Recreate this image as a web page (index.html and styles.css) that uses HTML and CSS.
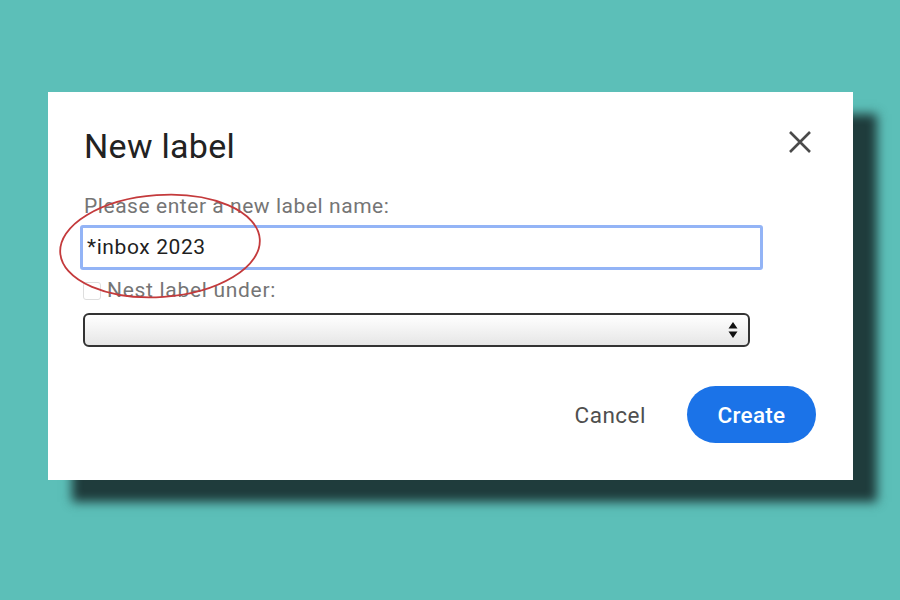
FILE: index.html
```html
<!DOCTYPE html>
<html>
<head>
<meta charset="utf-8">
<link rel="stylesheet" href="styles.css">
</head>
<body>
<div class="dialog">
  <div class="header">
    <h1 class="title">New label</h1>
    <button class="close" aria-label="Close">
      <svg width="24" height="24" viewBox="0 0 24 24"><path d="M2 2 L22 22 M22 2 L2 22" stroke="#4a4a4a" stroke-width="2.6" fill="none"/></svg>
    </button>
  </div>
  <div class="field-label">Please enter a new label name:</div>
  <div class="input">*inbox 2023</div>
  <div class="nest">
    <span class="checkbox"></span>
    <span class="nest-text">Nest label under:</span>
  </div>
  <div class="select">
    <svg class="arrows" width="10" height="20" viewBox="0 0 10 20"><path d="M5 2 L9.5 8.5 L0.5 8.5 Z M5 18 L9.5 11.5 L0.5 11.5 Z" fill="#111"/></svg>
  </div>
  <div class="actions">
    <button class="cancel">Cancel</button>
    <button class="create">Create</button>
  </div>
  <svg class="ellipse" width="220" height="120" viewBox="0 0 220 120"><ellipse cx="110" cy="60" rx="100" ry="51" transform="rotate(-4 110 60)" fill="none" stroke="#c43a3c" stroke-width="1.8"/></svg>
</div>
</body>
</html>
```
FILE: styles.css
```css
html, body {
  margin: 0;
  padding: 0;
}
body {
  background: #5cbfb8;
  width: 900px;
  height: 600px;
  overflow: hidden;
  padding: 92px 0 0 48px;
  box-sizing: border-box;
  font-family: Roboto, "Liberation Sans", Arial, sans-serif;
}
.dialog {
  position: relative;
  width: 805px;
  height: 388px;
  background: #fff;
  box-shadow: 24px 22px 10px #1f3c3c;
  box-sizing: border-box;
  padding: 34px 37px 0 32px;
  display: flex;
  flex-direction: column;
}
.header {
  display: flex;
  justify-content: space-between;
  align-items: flex-start;
  height: 40px;
}
.title {
  margin: 0 0 0 4px;
  font-size: 34px;
  line-height: 40px;
  font-weight: 400;
  letter-spacing: 0.3px;
  color: #222;
}
.close {
  border: 0;
  background: none;
  padding: 0;
  margin: 4px 4px 0 0;
  width: 24px;
  height: 24px;
}
.field-label {
  margin: 28px 0 0 4px;
  font-size: 21px;
  line-height: 24px;
  letter-spacing: 0.55px;
  color: #757575;
}
.input {
  margin-top: 7px;
  width: 683px;
  height: 45px;
  box-sizing: border-box;
  border: 3px solid #93b4f6;
  border-radius: 3px;
  padding: 0 0 0 4px;
  font-size: 21px;
  line-height: 39px;
  letter-spacing: 0.6px;
  color: #1f1f1f;
}
.nest {
  margin: 8px 0 0 3px;
  display: flex;
  align-items: center;
  height: 24px;
}
.checkbox {
  width: 16px;
  height: 16px;
  border: 1.5px solid #dedede;
  border-radius: 3px;
  margin-right: 6px;
  margin-top: 2px;
}
.nest-text {
  font-size: 21px;
  line-height: 24px;
  letter-spacing: 0.7px;
  color: #757575;
}
.select {
  margin: 11px 0 0 3px;
  width: 667px;
  height: 34px;
  box-sizing: border-box;
  border: 2px solid #333;
  border-radius: 6px;
  background: linear-gradient(#ffffff, #f4f4f4 45%, #e6e6e6);
  display: flex;
  align-items: center;
  justify-content: flex-end;
  padding-right: 10px;
}
.actions {
  margin-top: 39px;
  display: flex;
  justify-content: flex-end;
  align-items: center;
}
.cancel {
  border: 0;
  background: none;
  font-family: inherit;
  font-size: 22.5px;
  letter-spacing: 0.5px;
  color: #4f4f4f;
  padding: 0;
  margin-right: 41px;
}
.create {
  border: 0;
  background: #1b73e8;
  color: #fff;
  font-family: inherit;
  font-size: 22.5px;
  font-weight: 500;
  letter-spacing: 0.3px;
  width: 129px;
  height: 57px;
  border-radius: 29px;
}
.ellipse {
  position: absolute;
  left: 2px;
  top: 94px;
}
```
